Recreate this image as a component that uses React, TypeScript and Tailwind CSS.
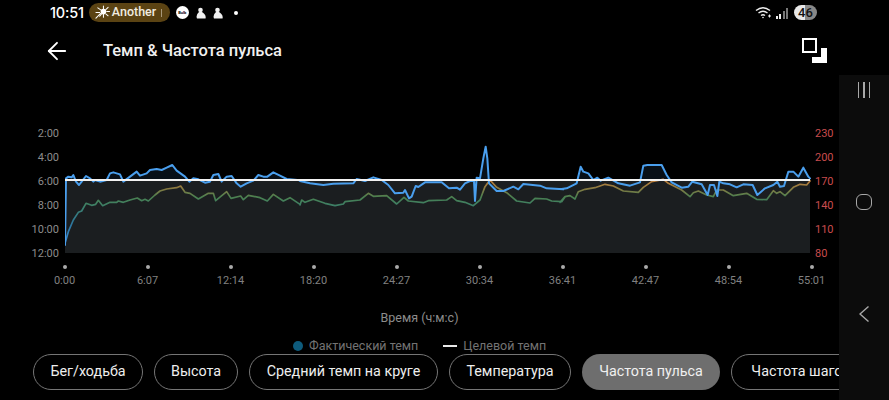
import React from "react";
import { ArrowLeft } from "lucide-react";

// chart points are read off the picture at 3x, one list per 270px-wide slice
type Pt = [number, number];

const shift = (pts: Pt[], dx: number): Pt[] => pts.map(([x, y]) => [x + dx, y]);
const toLine = (pts: Pt[]) => pts.map(([x, y]) => `${x},${y}`).join(" ");

const pace: Pt[] = [
	...([[105,360],[108,160],[115,155],[125,157],[130,150],[138,170],[147,180],[155,170],[168,153],[180,160],[190,170],[195,165],[210,170],[230,165],[240,145],[250,142],[270,148],[280,170],[300,155],[320,140],[330,152],[350,145],[360,135],[380,132],[395,135],[410,128],[427,120],[440,137],[465,155],[478,170],[490,160],[505,163],[525,173],[540,170],[550,150],[565,147],[575,170],[590,155],[605,153],[620,175],[632,185],[650,175],[670,167],[685,150],[700,155],[712,155],[730,142],[750,152],[770,162],[810,166]] as Pt[]),
	...shift([[0,168],[30,175],[70,180],[100,176],[160,175],[170,162],[195,168],[220,157],[245,165],[265,180],[285,205],[310,203],[315,195],[327,220],[335,215],[347,183],[355,186],[375,172],[425,172],[447,190],[470,188],[480,194],[495,175],[510,168],[522,168],[525,228],[530,158],[540,160],[550,100],[557,65],[562,100],[567,175],[590,198],[610,198],[640,185],[655,193],[670,177],[720,182],[740,190],[790,193]], 810),
	...shift([[0,193],[20,190],[50,175],[62,125],[70,140],[85,145],[100,165],[112,158],[122,167],[145,158],[175,175],[210,182],[240,172],[250,122],[262,120],[305,120],[320,150],[335,172],[365,188],[385,185],[397,170],[425,178],[443,210],[450,180],[462,180],[472,213],[478,170],[490,175],[510,178],[530,187],[550,178],[578,180],[592,210],[615,190],[640,180],[652,170],[660,185],[672,183],[685,140],[700,140],[715,155],[730,128],[745,155],[750,160]], 1590),
];

const heart: Pt[] = [
	...([[105,355],[115,320],[130,285],[145,262],[155,258],[168,235],[185,241],[197,238],[205,226],[218,242],[240,232],[260,232],[265,228],[280,232],[300,225],[322,219],[335,227],[345,223],[355,228],[375,210],[390,198],[410,192],[440,188],[452,183],[465,202],[480,205],[505,222],[535,205],[550,205],[557,227],[590,200],[603,220],[632,213],[640,224],[655,211],[690,218],[712,228],[730,208],[760,228],[780,218],[810,238]] as Pt[]),
	...shift([[0,240],[5,225],[15,232],[40,223],[75,235],[105,242],[130,237],[135,230],[180,225],[205,205],[220,214],[260,212],[290,237],[312,217],[325,228],[370,233],[385,227],[440,225],[455,215],[470,227],[495,232],[520,242],[540,225],[555,185],[570,165],[590,187],[620,203],[650,228],[690,234],[705,220],[740,222],[755,228],[785,230],[795,216]], 810),
	...shift([[0,232],[15,215],[30,212],[45,222],[55,200],[75,193],[105,188],[135,178],[160,183],[190,198],[235,202],[250,187],[275,170],[310,163],[325,175],[365,195],[390,215],[400,203],[415,198],[440,210],[460,215],[470,195],[490,195],[520,212],[560,205],[590,223],[620,224],[640,197],[650,205],[660,200],[675,212],[700,187],[720,178],[740,180],[750,168]], 1590),
];

const paceLabels = ["2:00", "4:00", "6:00", "8:00", "10:00", "12:00"];
const hrLabels = ["230", "200", "170", "140", "110", "80"];
const times = ["0:00", "6:07", "12:14", "18:20", "24:27", "30:34", "36:41", "42:47", "48:54", "55:01"];
const chips = [
	{ label: "Бег/ходьба", width: "w-[110px]" },
	{ label: "Высота", width: "w-[84px]" },
	{ label: "Средний темп на круге", width: "w-[189px]" },
	{ label: "Температура", width: "w-[122px]" },
	{ label: "Частота пульса", width: "w-[138px]", active: true },
	{ label: "Частота шагов", width: "w-[140px]" },
];

const PaceChart = () => (
	<svg viewBox="105 -12 2238 432" className="w-[746px] h-[144px] ml-[6px] shrink-0">
		<defs>
			<linearGradient id="hr" gradientUnits="userSpaceOnUse" x1="0" y1="160" x2="0" y2="360">
				<stop offset="0" stopColor="#d0803a" />
				<stop offset="0.16" stopColor="#857a42" />
				<stop offset="0.28" stopColor="#4a8050" />
				<stop offset="0.42" stopColor="#3c7f68" />
				<stop offset="0.7" stopColor="#2c76a0" />
				<stop offset="1" stopColor="#3a8fd8" />
			</linearGradient>
			<clipPath id="above">
				<rect x="105" y="0" width="2238" height="165" />
			</clipPath>
		</defs>
		<rect x="105" y="165" width="2235" height="219" fill="#1b1e20" />
		<polygon points={toLine(pace)} fill="#4a9eea" fillOpacity="0.1" clipPath="url(#above)" />
		<polyline points={toLine(heart)} fill="none" stroke="url(#hr)" strokeWidth="5" strokeLinejoin="round" strokeLinecap="round" />
		<polyline points={toLine(pace)} fill="none" stroke="#4a9fee" strokeWidth="6" strokeLinejoin="round" strokeLinecap="round" />
		<line x1="105" y1="165" x2="2340" y2="165" stroke="#f2f2f2" strokeWidth="6" />
	</svg>
);

const Snowman = () => (
	<svg viewBox="0 0 10 12" className="w-[10px] h-[12px]" fill="#f0f0f0">
		<circle cx="4.500" cy="3" r="2.300" />
		<path d="M1 11.500Q-0.500 8 3 5L6 5Q10.500 8 9.500 11.500Z" />
	</svg>
);

const StatusIcons = () => (
	<div className="flex items-center">
		<div className="ml-[6px] w-[13px] h-[13px] rounded-full bg-white flex items-center justify-center text-[4px] font-bold text-black">
			Bulb
		</div>
		<div className="ml-[7px] flex gap-[7px]">
			<Snowman />
			<Snowman />
		</div>
		<div className="ml-[11px] w-[4px] h-[4px] rounded-full bg-white" />
	</div>
);

const Sparkle = () => (
	<svg viewBox="0 0 16 16" className="w-[15px] h-[15px]" stroke="#fff" strokeWidth="1.1" strokeLinecap="round">
		<circle cx="9" cy="7" r="3" fill="#fff" stroke="none" />
		<path d="M9 1v3M14 2.500l-2.500 2.500M15.500 7h-3M14 11.500L11.500 9.500M9 13v-3M5 12l2.500-3M1 14l5-5M1 8h4M3 3l3.500 2.500" />
	</svg>
);

const Wifi = () => (
	<svg viewBox="0 0 18 13" className="w-[18px] h-[13px]" fill="none" stroke="#eee" strokeWidth="1.4">
		<path d="M1 4.500Q8 -1 15 4.500M3.500 7Q8 3.500 12.500 7M6 9.500Q8 8 10 9.500" />
		<circle cx="8" cy="11.500" r="0.8" fill="#eee" stroke="none" />
		<path d="M14.500 8.500v3M13 10h3" strokeWidth="1" />
	</svg>
);

const Signal = () => (
	<div className="ml-[3px] flex items-end gap-[1.5px] h-[12px]">
		<div className="w-[2px] h-[3px] bg-[#eee]" />
		<div className="w-[2px] h-[5px] bg-[#eee]" />
		<div className="w-[2px] h-[8px] bg-[#777]" />
		<div className="w-[2px] h-[11px] bg-[#777]" />
	</div>
);

const App = () => {
	return (
		<div className="w-[889px] h-[400px] bg-black overflow-hidden flex flex-col font-['Roboto',sans-serif]">
			<div className="h-[25px] shrink-0 flex items-center pl-[50px] pr-[72px]">
				<span className="text-white text-[14.5px] font-medium font-['Inter',sans-serif] tracking-[-0.2px]">10:51</span>
				<div className="ml-[5px] w-[81px] h-[19px] rounded-full bg-[#5b4313] flex items-center pl-[6px]">
					<Sparkle />
					<span className="ml-[2px] text-[#f1ece0] text-[12.5px] font-medium">Another</span>
					<div className="ml-[5px] w-px h-[8px] bg-[#a8987a]" />
				</div>
				<StatusIcons />
				<div className="ml-auto flex items-center">
					<Wifi />
					<Signal />
					<div className="ml-[6px] w-[23px] h-[15px] rounded-full bg-[linear-gradient(to_right,#e8e8e8_50%,#888_50%)] flex items-center justify-center text-[13px] font-medium text-[#111]">
						46
					</div>
				</div>
			</div>

			<div className="h-[50px] shrink-0 flex items-center pt-[2px] pl-[43px] pr-[62px]">
				<ArrowLeft className="w-[28px] h-[28px] text-white" strokeWidth={1.6} />
				<h1 className="ml-[32px] text-[#f0f0f0] text-[16.5px] font-medium">Темп &amp; Частота пульса</h1>
				<div className="ml-auto -mt-[2px] relative w-[25px] h-[25px]">
					<div className="w-[15px] h-[15px] border-[2.5px] border-white" />
					<div className="absolute right-0 bottom-0 w-[15px] h-[15px] bg-[linear-gradient(to_right,transparent_9px,#fff_9px),linear-gradient(to_top,#fff_6px,transparent_6px)]" />
				</div>
			</div>

			<div className="flex-1 flex min-h-0">
				<div className="w-[839px] shrink-0 overflow-hidden flex flex-col">
					<div className="mt-[46px] flex">
						<div className="w-[59px] shrink-0 flex flex-col items-end pt-[1px] text-[11px] leading-[24px] text-[#8c8c8c]">
							{paceLabels.map((label) => (
								<span key={label}>{label}</span>
							))}
						</div>
						<PaceChart />
						<div className="ml-[4px] flex flex-col pt-[1px] text-[11px] leading-[24px] text-[#c94c4e]">
							{hrLabels.map((label) => (
								<span key={label}>{label}</span>
							))}
						</div>
					</div>

					<div className="ml-[23px] w-[830px] grid grid-cols-10 shrink-0 -mt-[1px]">
						{times.map((time) => (
							<div key={time} className="flex flex-col items-center">
								<div className="w-[4px] h-[4px] rounded-full bg-[#aaa]" />
								<span className="mt-[4px] text-[11px] leading-[16px] text-[#808080]">{time}</span>
							</div>
						))}
					</div>

					<div className="mt-[19px] text-center text-[12.5px] leading-[20px] text-[#8c8c8c]">Время (ч:м:с)</div>

					<div className="mt-[12px] h-[12px] flex items-center justify-start pl-[293px] text-[12.5px] leading-[12px] text-[#737373]">
						<div className="w-[10px] h-[10px] rounded-full bg-[#0e5b7c]" />
						<span className="ml-[6px]">Фактический темп</span>
						<div className="ml-[25px] w-[14px] h-[2px] bg-[#e8e8e8]" />
						<span className="ml-[6px]">Целевой темп</span>
					</div>

					<div className="mt-[2px] pl-[33px] flex gap-[11px]">
						{chips.map((chip) => (
							<div
								key={chip.label}
								className={
									chip.width +
									(chip.active
										? " h-[36px] shrink-0 rounded-full flex items-center justify-center whitespace-nowrap text-[14.3px] text-[#f0f0f0] bg-[#6e6e6e]"
										: " h-[36px] shrink-0 rounded-full flex items-center justify-center whitespace-nowrap text-[14.3px] text-[#eeeeee] border border-[#757575]")
								}
							>
								{chip.label}
							</div>
						))}
					</div>
				</div>

				<div className="w-[50px] shrink-0 bg-[#0c0c0c] flex flex-col items-center">
					<div className="mt-[7px] flex gap-[4px]">
						<div className="w-[1.5px] h-[16px] bg-[#a8a8a8]" />
						<div className="w-[1.5px] h-[16px] bg-[#a8a8a8]" />
						<div className="w-[1.5px] h-[16px] bg-[#a8a8a8]" />
					</div>
					<div className="mt-[96px] w-[16px] h-[16px] rounded-[6px] border-[1.5px] border-[#a8a8a8]" />
					<svg viewBox="0 0 10 16" className="mt-[96px] w-[10px] h-[16px]" fill="none" stroke="#a8a8a8" strokeWidth="1.4">
						<path d="M9.500 0.500L1 8l8.500 7.500" />
					</svg>
				</div>
			</div>
		</div>
	);
};

export default App;
